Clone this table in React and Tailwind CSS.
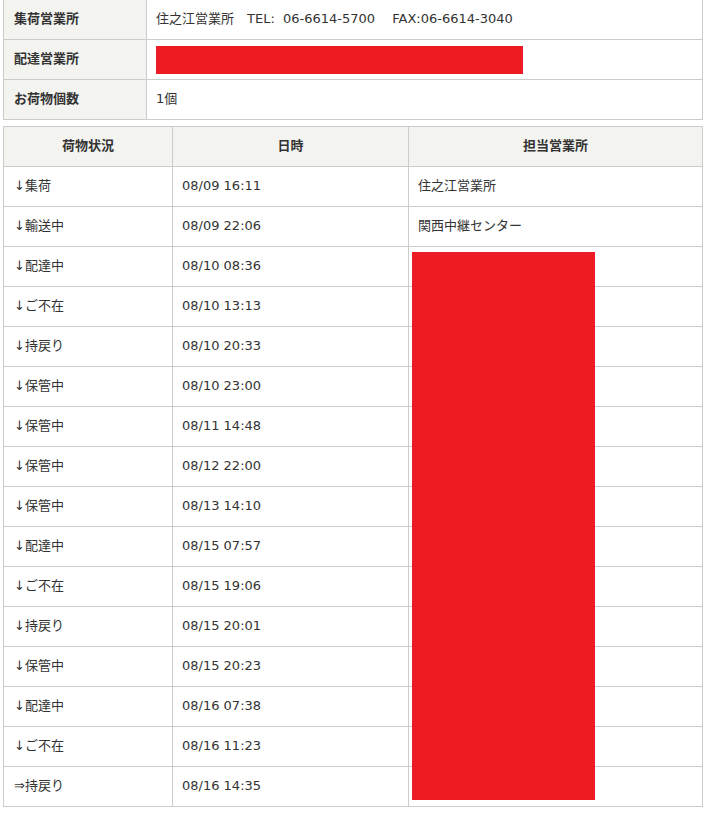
const info = [
  { label: '集荷営業所', value: '住之江営業所\u3000TEL:\u00a0\u00a006-6614-5700\u3000 FAX:06-6614-3040' },
  { label: '配達営業所', redacted: true },
  { label: 'お荷物個数', value: '1個' },
];

const rows = [
  ['↓集荷', '08/09 16:11', '住之江営業所'],
  ['↓輸送中', '08/09 22:06', '関西中継センター'],
  ['↓配達中', '08/10 08:36', ''],
  ['↓ご不在', '08/10 13:13', ''],
  ['↓持戻り', '08/10 20:33', ''],
  ['↓保管中', '08/10 23:00', ''],
  ['↓保管中', '08/11 14:48', ''],
  ['↓保管中', '08/12 22:00', ''],
  ['↓保管中', '08/13 14:10', ''],
  ['↓配達中', '08/15 07:57', ''],
  ['↓ご不在', '08/15 19:06', ''],
  ['↓持戻り', '08/15 20:01', ''],
  ['↓保管中', '08/15 20:23', ''],
  ['↓配達中', '08/16 07:38', ''],
  ['↓ご不在', '08/16 11:23', ''],
  ['⇒持戻り', '08/16 14:35', ''],
];

export default function App() {
  return (
    <div
      className="w-[712px] h-[816px] bg-white text-[13px] leading-[18px] text-[#333] pl-[3px] overflow-hidden"
      style={{ fontFamily: '"DejaVu Sans", "Noto Sans CJK JP", sans-serif' }}
    >
      {/* shipment summary */}
      <table className="w-[700px] border-collapse table-fixed -mt-px">
        <colgroup>
          <col className="w-[143px]" />
          <col />
        </colgroup>
        <tbody>
          {info.map(r => (
            <tr key={r.label} className="h-[40px]">
              <th className="border border-[#cccccc] bg-[#f3f3f0] text-left font-bold pl-[10px] pb-[2px]">{r.label}</th>
              <td className="border border-[#cccccc] pl-[9px] pb-[2px]">
                {r.redacted ? <div className="w-[367px] h-[28px] mt-[2px] bg-[#ed1c24]" /> : r.value}
              </td>
            </tr>
          ))}
        </tbody>
      </table>

      {/* tracking history */}
      <div className="relative mt-[6px] w-[700px]">
        <table className="w-full border-collapse table-fixed">
          <colgroup>
            <col className="w-[169px]" />
            <col className="w-[236px]" />
            <col />
          </colgroup>
          <thead>
            <tr className="h-[40px] bg-[#f3f3f0]">
              <th className="border border-[#cccccc] font-bold pb-[2px]">荷物状況</th>
              <th className="border border-[#cccccc] font-bold pb-[2px]">日時</th>
              <th className="border border-[#cccccc] font-bold pb-[2px]">担当営業所</th>
            </tr>
          </thead>
          <tbody>
            {rows.map((r, i) => (
              <tr key={i} className="h-[40px]">
                <td className="border border-[#cccccc] pl-[10px] pb-[2px]">{r[0]}</td>
                <td className="border border-[#cccccc] pl-[9px] pb-[2px]">{r[1]}</td>
                <td className="border border-[#cccccc] pl-[9px] pb-[2px]">{r[2]}</td>
              </tr>
            ))}
          </tbody>
        </table>
        <div className="absolute left-[409px] top-[126px] w-[183px] h-[548px] bg-[#ed1c24]" />
      </div>
    </div>
  );
}
